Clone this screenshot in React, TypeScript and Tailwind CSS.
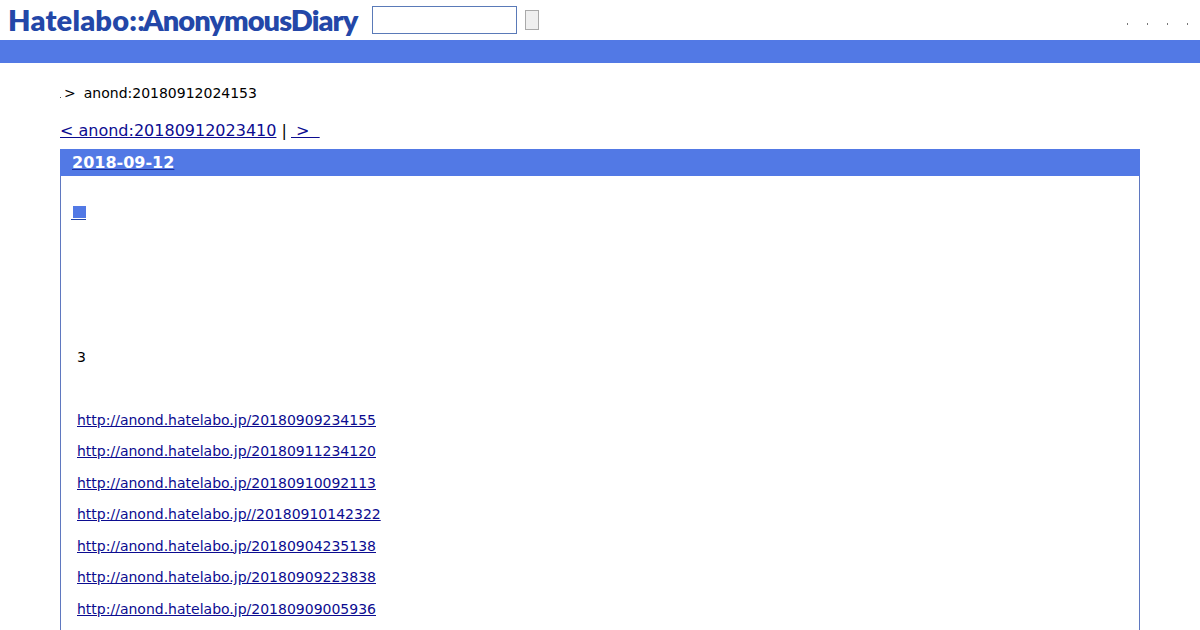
const links = [
  "http://anond.hatelabo.jp/20180909234155",
  "http://anond.hatelabo.jp/20180911234120",
  "http://anond.hatelabo.jp/20180910092113",
  "http://anond.hatelabo.jp//20180910142322",
  "http://anond.hatelabo.jp/20180904235138",
  "http://anond.hatelabo.jp/20180909223838",
  "http://anond.hatelabo.jp/20180909005936",
];

const Header = () => (
  <div className="flex h-10 items-center bg-white">
    <a className="ml-[8px] flex w-[350px] whitespace-nowrap font-['Lato',sans-serif] text-[29px] font-extrabold leading-10 text-[#2347a8]">
      <span className="w-[135px] tracking-[0.2px]">Hatelabo::</span>
      <span className="tracking-[-0.95px]">AnonymousDiary</span>
    </a>
    <input
      type="text"
      className="ml-[14px] h-7 w-[145px] border border-[#5a7ab8] bg-white"
    />
    <div className="ml-2 h-5 w-[14px] border border-[#a9a9a9] bg-[#efefef]" />
    <div className="ml-auto mr-[11px] flex gap-[17px]">
      {[0, 1, 2, 3].map((i) => (
        <span key={i} className="mt-[7px] h-[2px] w-[3px] text-center">
          <span className="mx-auto block h-[2px] w-px bg-[#777777]" />
        </span>
      ))}
    </div>
  </div>
);

const App = () => {
  return (
    <div className="h-[630px] overflow-hidden bg-white font-['DejaVu_Sans',sans-serif] text-sm text-black">
      <Header />
      <div className="h-[23px] bg-[#5279e5]" />

      <div className="px-[60px]">
        <div className="mt-[21px] flex h-[18px] items-center leading-[18px]">
          <span className="mt-[8px] h-px w-px bg-[#555555]" />
          <span className="ml-[3px]">&gt;</span>
          <span className="ml-[8px]">anond:20180912024153</span>
        </div>

        <div className="mt-[19px] flex h-[20px] items-center whitespace-pre text-base leading-5">
          <a className="text-[#0c0c90] underline">&lt; anond:20180912023410</a>
          <span> | </span>
          <a className="-ml-px text-[#0c0c90] underline"> &gt;  </a>
        </div>

        <div className="mt-[8px] border-x border-[#5f78c0]">
          <div className="-mx-px flex h-[27px] items-center bg-[#5279e5] pl-3 text-base font-bold text-white">
            <a className="underline decoration-[#1a2f9c]">2018-09-12</a>
          </div>

          <div className="pl-[10px] pt-[28px]">
            <a className="flex h-[16px] w-[15px] items-start justify-end border-b border-[#2347a8]">
              <span className="mt-[2px] h-3 w-[13px] bg-[#5279e5]" />
            </a>
          </div>

          <div className="pl-4">
            <p className="mt-[128px] h-[18px] leading-[18px]">3</p>
            <ul className="mt-[44.5px] flex flex-col gap-[13.5px]">
              {links.map((href) => (
                <li key={href} className="h-[18px] leading-[18px]">
                  <a className="text-[#0c0c90] underline">{href}</a>
                </li>
              ))}
            </ul>
          </div>
          <div className="h-10" />
        </div>
      </div>
    </div>
  );
};

export default App;
